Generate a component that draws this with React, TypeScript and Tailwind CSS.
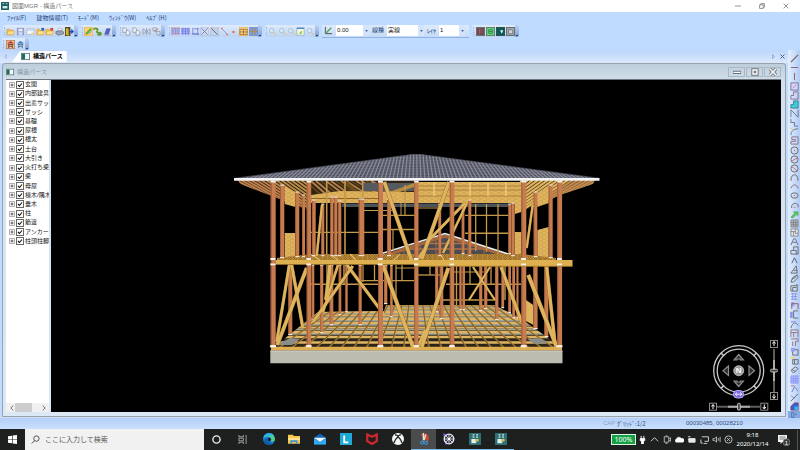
import React from "react";

const UI_FONT = "font-['Liberation_Sans','Noto_Sans_CJK_JP',sans-serif]";
const JP_FONT = "font-['Noto_Sans_CJK_JP',sans-serif]";

type Kids = { children: React.ReactNode };

function Icon({ children, className = "size-[10px]" }: Kids & { className?: string }) {
  return (
    <svg viewBox="0 0 10 10" className={className} fill="none" stroke="#666" strokeWidth="1" aria-hidden="true">
      {children}
    </svg>
  );
}

/* ---------- toolbar icons ---------- */

const folder = (
  <>
    <path d="M1 8.500V2.500h3l1 1h3v5z" fill="#f6c453" stroke="#c9952f" strokeWidth=".6" />
    <path d="M1 8.500l1.500-4H9.500L8 8.500z" fill="#ffe08a" stroke="#c9952f" strokeWidth=".5" />
  </>
);
const folderUp = (
  <>
    {folder}
    <path d="M6 4V1h3v3z" fill="#2c5fc4" stroke="none" />
  </>
);
const folderRed = (
  <>
    {folder}
    <path d="M6 4V1h3v3z" fill="#d9402f" stroke="none" />
  </>
);
const save = (
  <>
    <rect x="1.500" y="1.500" width="7" height="7" fill="#a9b4dc" stroke="#8994c4" />
    <rect x="3" y="2" width="4" height="2.500" fill="#eef1fb" stroke="none" />
    <rect x="3" y="6" width="4" height="2.500" fill="#dfe4f5" stroke="none" />
  </>
);
const sheet = (
  <>
    <rect x="1" y="2" width="8" height="6.500" fill="#f4f5fa" stroke="#9fabc8" strokeWidth=".7" />
    <path d="M1 3.500h8" stroke="#b7c3dd" />
    <path d="M6 6h3v2.500H6z" fill="#e8d7a0" stroke="none" />
  </>
);
const printer = (
  <>
    <path d="M3 4l2-3 3 1-1 3z" fill="#fff" stroke="#8b93a3" strokeWidth=".6" />
    <path d="M1 5l6-1 2.500 1.500v2L4 9 1 7.500z" fill="#9aa3b3" stroke="#555e70" strokeWidth=".7" />
  </>
);
const exit = (
  <>
    <path d="M0 0h6v10H0z" fill="#4b4a2e" stroke="none" />
    <path d="M1 1l3 1v8L1 8.500z" fill="#dcb51e" stroke="none" />
    <path d="M5 4.500h2V2l3 3-3 3V6H5z" fill="#2346c8" stroke="none" />
  </>
);
const pencilBox = (
  <>
    <rect x="0" y="0" width="10" height="10" fill="#ffcf7a" stroke="#c8963e" strokeWidth=".6" />
    <path d="M2 8L8 2" stroke="#5fb03a" strokeWidth="2.500" />
    <path d="M5 8l3-3" stroke="#4b9bd0" />
  </>
);
const greenLink = (
  <>
    <path d="M1 3c0-2 4-2 4 0s-2 2 0 3 4 0 4 1.500S6 9 5 8" stroke="#5a9a2e" strokeWidth="2" />
    <path d="M2 2l3 3" stroke="#d9cf3e" />
  </>
);
const eraser = (
  <>
    <path d="M2 8l2-6h4L6 8z" fill="#5a62c8" stroke="#3e458f" strokeWidth=".6" />
    <path d="M1 9h7" stroke="#8a93c8" />
  </>
);
const copies = (
  <>
    <path d="M1 1h3l1 1v4H1z" fill="#eef2fa" stroke="#8a93a3" strokeWidth=".8" />
    <path d="M4.500 4h3l1 1v4h-4z" fill="#eef2fa" stroke="#8a93a3" strokeWidth=".8" />
  </>
);
const mirror = <path d="M1 2v6l3-2V4zM9 2v6L6 6V4zM5 1v8" stroke="#8a93a3" strokeWidth=".8" />;
const redCopy = (
  <>
    <path d="M1 1h4v3H1zM4 5h5v4H6z" stroke="#8a93a3" strokeWidth=".8" />
    <path d="M2 5l5-3" stroke="#c8786e" />
  </>
);
const gridRed = (
  <>
    <path d="M0 1h10v7H0z" fill="#b9bdf0" stroke="none" />
    <path d="M0 2h10M0 4.500h10M0 7h10M2 1v7M5 1v7M8 1v7" stroke="#8a8fd2" strokeWidth=".8" />
    <path d="M0 1h10M0 8h10" stroke="#d08a8a" strokeWidth=".8" />
  </>
);
const gridBlue = (
  <>
    <path d="M0 1h10v7H0z" fill="#bcc4f6" stroke="none" />
    <path d="M0 2h10M0 4.500h10M0 7h10M2 1v8M5 1v8M8 1v8" stroke="#6a76e0" strokeWidth=".9" />
  </>
);
const gridEdge = <path d="M2 1v7h7M7.500 1v8M1 7.500h8M3 2h6" stroke="#6c78d8" strokeWidth=".9" />;
const cross = (
  <>
    <path d="M.5.5h9v9h-9z" fill="#cfdcf2" stroke="#a9b9d6" strokeWidth=".6" />
    <path d="M1.500 1.500l7 7M8.500 1.500l-7 7" stroke="#65769c" strokeWidth=".9" />
  </>
);
const diag = (
  <>
    <path d="M.5.5h9v9h-9z" fill="#c3d0e6" stroke="#a9b9d6" strokeWidth=".6" />
    <path d="M1.500 1.500l7 7" stroke="#55658a" />
    <path d="M1 1h1.500v1.500H1z" fill="#d98458" stroke="none" />
  </>
);
const diagRed = (
  <>
    <path d="M2 2l6 6" stroke="#8193b4" />
    <path d="M1 1.500h2M7 8.500h2" stroke="#dd7755" strokeWidth="1.500" />
  </>
);
const dot = <circle cx="5" cy="5.500" r="1.300" fill="#e2703c" stroke="none" />;
const tableOrange = (
  <>
    <rect x="0" y="0" width="10" height="10" fill="#fbd68c" stroke="#c8963e" strokeWidth=".6" />
    <path d="M1 2.500h8v6H1zM1 5.500h8M5 2.500v6" stroke="#a4702c" />
  </>
);
const tableBlue = (
  <>
    <rect x="0" y="0" width="10" height="10" fill="#7f9ede" stroke="#6c8ac2" strokeWidth=".6" />
    <path d="M0 5h10M3.500 1v8M7 1v8" stroke="#a88c62" strokeWidth="1.300" />
  </>
);
const lens = (
  <>
    <circle cx="4" cy="4" r="2.500" fill="#d5e6f4" stroke="#a3c1d8" strokeWidth="1" />
    <path d="M6 6l3 3" stroke="#dcc3a2" strokeWidth="1.500" />
  </>
);
const lensPage = (
  <>
    <rect x="1" y="1" width="8" height="8" fill="#f6f9d6" stroke="#7fa6c8" strokeWidth=".7" />
    <path d="M1 1.500h8" stroke="#4e86c8" strokeWidth="1.500" />
    <path d="M3 7.500l3.500-3.500v3.500z" fill="#8bc34a" stroke="none" />
  </>
);
const angle = (
  <>
    <path d="M1.500 1v7.500H9" stroke="#3e4b57" />
    <path d="M2 8l6-6" stroke="#4fa154" strokeWidth="1.500" />
  </>
);
const darkGrid = (
  <>
    <rect x=".5" y=".5" width="9" height="9" fill="#6b4a55" stroke="#6a7068" />
    <path d="M3 3h4M3 5.500h4M4 2v6" stroke="#b5586e" strokeWidth=".9" />
  </>
);
const greenGrid = (
  <>
    <rect x=".5" y=".5" width="9" height="9" fill="#62cf80" stroke="#5a8060" />
    <path d="M3 3h4v4H3zM3 5h4" stroke="#2f7a48" strokeWidth=".8" />
  </>
);
const teal = (
  <>
    <rect x=".5" y=".5" width="9" height="9" fill="#0d5a58" stroke="#2c4a4a" />
    <path d="M4.500 3.500h3.500L6.500 7.500z" fill="#e4f6ef" stroke="none" />
  </>
);
const pages = (
  <>
    <rect x=".5" y=".5" width="9" height="9" fill="#a2a8ac" stroke="#5e656a" />
    <path d="M3 3h3l1.500 1.500V7.500H3z" fill="#d3d7da" stroke="#54595e" strokeWidth=".7" />
  </>
);
const houseRed = (
  <>
    <rect x=".3" y=".3" width="9.400" height="9.400" fill="#f2b98c" stroke="#9c7250" strokeWidth=".7" />
    <path d="M1 4L5 1 9 4z" fill="#c4382e" stroke="none" />
    <path d="M2 5h6M3 5v4M7 5v4M3 7h4" stroke="#583c2c" strokeWidth=".9" />
  </>
);
const houseBlue = (
  <>
    <path d="M1 4L5 1 9 4z" fill="#2e7ac8" stroke="none" />
    <path d="M2 5h6M3 5v4M7 5v4M3 7h4" stroke="#40668f" strokeWidth=".9" />
  </>
);

type Tool = [string, React.ReactNode];

const fileTools: Tool[] = [["開く", folder], ["保存", save], ["図面", sheet], ["読込", folderUp], ["書出", folderRed], ["印刷", printer], ["終了", exit]];
const drawTools: Tool[] = [["編集", pencilBox], ["連結", greenLink], ["消去", eraser]];
const copyTools: Tool[] = [["複写", copies], ["連続複写", copies], ["反転", mirror], ["変形", redCopy]];
const snapTools: Tool[] = [["グリッド1", gridRed], ["グリッド2", gridBlue], ["端部", gridEdge], ["交点", cross], ["線上", diag], ["端点", diagRed], ["点", dot], ["表1", tableOrange], ["表2", tableBlue]];
const zoomTools: Tool[] = [["拡大", lens], ["範囲", lens], ["縮小", lens], ["全体", lensPage], ["前画面", lens]];
const viewTools: Tool[] = [["表示1", darkGrid], ["表示2", greenGrid], ["表示3", teal], ["表示4", pages]];
const houseTools: Tool[] = [["構造", houseRed], ["外観", houseBlue]];

function ToolButtons({ tools }: { tools: Tool[] }) {
  return (
    <>
      {tools.map(([name, art]) => (
        <button key={name} aria-label={name} className="flex h-full min-w-0 flex-1 items-center justify-center">
          <Icon className="size-[9px]">{art}</Icon>
        </button>
      ))}
    </>
  );
}

function ToolGroup({ width, children }: Kids & { width: string }) {
  return (
    <div className={`flex h-3 shrink-0 items-center rounded-[2px] bg-linear-to-b from-[#dfebfc] to-[#bdd3f3] ${width}`}>
      <span className="mx-px h-2 border-l border-dotted border-[#9db8e2]" />
      {children}
      <span className="flex h-3 w-1 shrink-0 items-end justify-center rounded-r-[2px] bg-linear-to-b from-[#bcd2f2] to-[#7f9fd0]">
        <span className="mb-px h-px w-[2px] bg-[#27457c]" />
      </span>
    </div>
  );
}

function Combo({ id, value, width, options }: { id: string; value: string; width: string; options: string[] }) {
  return (
    <span className={`grid h-[11px] shrink-0 items-center bg-white ${width}`}>
      <select
        id={id}
        aria-label={id}
        defaultValue={value}
        className="col-start-1 row-start-1 h-[11px] w-full appearance-none bg-transparent px-px text-[6px] leading-[11px] text-[#222] outline-none"
      >
        {options.map((o) => (
          <option key={o}>{o}</option>
        ))}
      </select>
      <span className="pointer-events-none col-start-1 row-start-1 flex h-[11px] w-[6px] items-center justify-center justify-self-end bg-[#d3e3fa]">
        <svg viewBox="0 0 4 3" className="h-[2px] w-[3px]"><path d="M0 0h4L2 3z" fill="#3f5f96" /></svg>
      </span>
    </span>
  );
}

/* ---------- right tool column ---------- */

const R = "#c06a78";
const sideIcons: React.ReactNode[] = [
  <path d="M1 9L9 1" stroke="#776068" strokeWidth="1.300" />,
  <path d="M1 5h8" stroke="#8a5868" />,
  <path d="M5 1v8" stroke="#8a5868" />,
  <><rect x="1" y="1" width="8" height="8" fill="#d9d4f5" stroke="#77749a" /><path d="M3 7l4-4" stroke="#b37fe0" /></>,
  <path d="M4 1h5v8H1V5h3z" stroke="#8a6d84" />,
  <path d="M4 1h5v8H1V5h3z" fill="#35cfdc" stroke="#4a7a84" />,
  <path d="M1 9V1l8 8V1" stroke="#62748a" />,
  <path d="M1 1v4h4v4h4" stroke="#62748a" />,
  <><path d="M1 9c0-4 3-7 8-7" stroke="#62748a" /><path d="M1 1l3 3" stroke="#e0c23e" /></>,
  <path d="M1 9h8V1H2v3h4v2H1z" stroke="#8a6d84" />,
  <><circle cx="5" cy="5" r="4" /><circle cx="5" cy="5" r=".7" fill={R} stroke="none" /></>,
  <><circle cx="5" cy="5" r="4" /><path d="M1 7l8-4" stroke={R} /></>,
  <><circle cx="5" cy="5" r="4" /><path d="M5 5l3 3M2 3l3 2" stroke={R} /></>,
  <><path d="M1 8c0-8 8-8 8 0" /><path d="M1 8h1M8 8h1" stroke={R} /></>,
  <path d="M1 7c2-5 6-5 8 0" stroke="#83616d" />,
  <><ellipse cx="5" cy="5" rx="4" ry="3" /><circle cx="5" cy="5" r=".7" fill={R} stroke="none" /></>,
  <><path d="M2 8c-2-6 8-8 7-1" /><path d="M4 7h2" stroke={R} /></>,
  <path d="M1 8l4-4-1-2h5v4L7 5 3 9z" fill="#5cc95c" stroke="#3a9e46" strokeWidth=".6" />,
  <><path d="M1 1h8v8H1z" fill="#b4b9c2" stroke="none" /><path d="M1 1h8v8H1zM1 4h8M1 6.500h8M4 1v8M6.500 1v8" strokeWidth=".6" /></>,
  <><path d="M1 1h8v8H1z" fill="#e3e6ea" stroke="none" /><path d="M1 1h8v8H1zM1 4h5M4 4v5M6 1v5h3" strokeWidth=".7" /></>,
  <path d="M1 9l3-7h2l3 7M3 6h4" stroke="#6a6d84" />,
  <path d="M1 9V5h3V1h5v8zM4 5h3v4" />,
  <path d="M2 8l3-6 3 6" stroke="#514f66" />,
  <path d="M1 9l6-8 1 8zM4 6h4" />,
  <path d="M1 9l2-5 5-3 1 3-5 5zM2 6l5-3" />,
  <path d="M1 3h7v6H1zM3 9V5h4M7 1l2 2" />,
  <path d="M1 2h7M1 5h7M1 8h7M3 1v8M6 1v8" stroke="#8a94ea" />,
  <><path d="M1 1h4v5H1z" fill="#a6a8f5" stroke="none" /><path d="M2 9V3h7v6" stroke="#8a5868" /></>,
  <><path d="M0 2h3v7H0z" fill="#9096ee" stroke="none" /><path d="M9 1H4v8h5" /></>,
  <><path d="M1 9c2-7 6-7 8-3" /><path d="M1 2h6" stroke="#a0a5f2" strokeWidth="2" /></>,
  <path d="M1 9V1h8v8M1 4h8M4 4v5" stroke="#95707c" />,
  <path d="M1 1h8v3H6v5M3 4v5" stroke="#95707c" />,
  <><path d="M3 3h6v6H3z" /><path d="M1 1h5v4H1z" fill="#9aa0f0" stroke="none" /></>,
  <><path d="M3 4h6v5H3zM5 4v5" /><path d="M1 1h4v2H1z" fill="#e5d66a" stroke="none" /></>,
  <path d="M1 6l5-4 3 2-5 5zM2 5l4 2" />,
  <><path d="M1 1h8v8H1z" fill="#b9c0fa" stroke="none" /><path d="M1 1h8v8H1zM1 4h8M1 6.500h8M4 1v8M6.500 1v8" stroke="#858cf2" strokeWidth=".8" /></>,
  <><path d="M2 9l3-6 4 5" stroke="#6a78cc" /><path d="M1 2h4" stroke={R} /></>,
  <><path d="M1 9l8-8" /><path d="M1 3l4 3" stroke="#7b82f0" /></>,
  <><path d="M1 9V5l4-4h4v8z" fill="#2e62d8" stroke="#8f3d5c" /><path d="M5 5h4v4H5z" fill="#39b5e4" stroke="none" /></>,
];

function SideTools() {
  return (
    <aside className="flex w-3 shrink-0 flex-col bg-linear-to-r from-[#e3eefe] to-[#b2ccf3] pt-1">
      {sideIcons.map((art, i) => (
        <button key={i} aria-label={`作図 ${i + 1}`} className="flex min-h-0 flex-1 items-center justify-center overflow-hidden">
          <Icon className="size-[9px]">{art}</Icon>
        </button>
      ))}
      <button aria-label="その他" className="flex h-[7px] items-center justify-center bg-[#85a9de]">
        <Icon className="size-[6px]"><path d="M1 1h4v8H1zM7 4h3" stroke="#3560a8" /></Icon>
      </button>
    </aside>
  );
}

/* ---------- tree ---------- */

const parts = ["玄関", "内部建具", "出窓サッシ", "サッシ", "基礎", "屋根", "根太", "土台", "大引き", "火打ち梁", "梁", "母屋", "棟木/隅木", "垂木", "柱", "筋違", "アンカーボルト", "柱頭柱脚"];

function Tree() {
  return (
    <div className="flex w-[43px] shrink-0 flex-col overflow-hidden bg-white">
      <ul className="flex h-[166px] flex-col">
        {parts.map((name) => (
          <li key={name} className="flex min-h-0 flex-1 items-center pl-[3px]">
            <button aria-label={`${name}を展開`} className="mr-px shrink-0">
              <svg viewBox="0 0 6 6" className="size-[6px]">
                <path d="M.5.5h5v5h-5z" fill="#fff" stroke="#9a9a9a" strokeWidth=".8" />
                <path d="M1.500 3h3M3 1.500v3" stroke="#333" strokeWidth=".8" />
              </svg>
            </button>
            <label className="flex items-center gap-px whitespace-nowrap text-[6px] leading-[9px] text-[#111]">
              <span className="grid size-2 shrink-0">
                <input type="checkbox" defaultChecked className="peer col-start-1 row-start-1 size-2 appearance-none border border-[#666] bg-white" />
                <svg viewBox="0 0 8 8" className="pointer-events-none invisible col-start-1 row-start-1 size-2 peer-checked:visible">
                  <path d="M2 4l1.500 1.500L6 2.500" fill="none" stroke="#111" strokeWidth="1.100" />
                </svg>
              </span>
              {name}
            </label>
          </li>
        ))}
      </ul>
      <div className="mt-auto flex h-[9px] items-center bg-[#f0f0f0] px-[2px]">
        <button aria-label="左へ" className="flex w-[7px] justify-center">
          <Icon className="size-[6px]"><path d="M7 1L3 5l4 4" strokeWidth="1.600" /></Icon>
        </button>
        <span className="h-[9px] w-[17px] bg-[#cdcdcd]" />
        <button aria-label="右へ" className="ml-auto flex w-[7px] justify-center">
          <Icon className="size-[6px]"><path d="M3 1l4 4-4 4" strokeWidth="1.600" /></Icon>
        </button>
      </div>
    </div>
  );
}

/* ---------- perspective of the timber frame ---------- */

type Post = [number, number, number, number]; // x, width, top, bottom
type Seg = [number, number, number, number, number]; // x1, y1, x2, y2, width

const upperBack: Post[] = [
  [280, 4.3, 185, 258], [295.3, 4, 192, 257], [302, 3, 195, 257], [312, 3.7, 200, 256], [321.3, 3, 204, 256],
  [330.3, 3.2, 197, 256], [334.2, 3.2, 197, 256], [338, 3.3, 201, 256], [358.7, 5.6, 199, 256], [387, 4, 199, 256],
  [438.3, 2.9, 204, 256], [461.7, 2.7, 204, 254], [468.3, 3, 200, 256], [508.3, 2.7, 204, 254], [511.3, 3.4, 203, 256],
  [533.7, 3.6, 192, 257], [548.7, 4, 185, 258],
];
const lowerBack: Post[] = [
  [288.3, 4, 265, 335], [311.7, 2.6, 265, 320], [320, 3.3, 265, 333], [329.7, 3.6, 265, 325], [338.7, 2.6, 265, 315],
  [345.3, 2.4, 265, 312], [358.7, 3, 265, 325], [384, 3.3, 265, 304], [390, 2.7, 265, 317], [435, 3.3, 265, 312],
  [439.7, 3.6, 265, 319], [459.3, 2.4, 265, 310], [462.5, 2.5, 265, 310], [479, 3.3, 265, 311], [484, 3.3, 265, 309],
  [495, 3.4, 265, 320], [501.5, 2.6, 265, 308], [508.3, 2.7, 265, 313], [512.3, 2.7, 265, 318], [516.5, 2, 265, 318],
  [533.3, 4.3, 265, 329], [544.3, 4, 265, 337],
];
const front: Post[] = [
  [270.7, 5, 181, 346], [306.7, 4.5, 181, 346], [378, 5, 181, 346], [414.3, 4.2, 181, 346],
  [449.8, 4.5, 181, 346], [521.4, 4.9, 181, 346], [557.3, 4.8, 181, 346],
];
const braces: Seg[] = [
  [322, 205, 316.7, 256, 2.6], [384.3, 182, 411.7, 261, 4], [449, 182, 421.7, 259, 4], [465, 203, 427, 242, 3],
  [467, 203, 443, 253, 2.6], [532.7, 205, 526.7, 248, 2.5], [424, 250, 416, 262, 3],
  [289.3, 265, 276.7, 342, 3.2], [306.7, 268, 277.3, 345, 4], [291.7, 265, 302.7, 327, 3.4], [338, 265, 323, 312, 2.8],
  [352.7, 266, 313, 322, 3.4], [347, 265, 385, 316, 3.4], [330, 265, 326, 300, 4], [383, 265, 413, 347, 4.2],
  [448.3, 268, 421.7, 347, 4.2], [501, 267, 521.7, 322, 3.6], [528.3, 275, 556.7, 347, 4.2], [546.7, 267, 555, 344, 3.6],
  [473, 267, 495, 300, 2.2], [490, 267, 469, 300, 2.2], [425, 330, 418, 347, 3],
];
const studs: Seg[] = [
  [311, 232.4, 378, 232.4, 1.4], [326.7, 181, 326.7, 256, 1.6], [345, 181, 345, 256, 1.6], [362.7, 181, 362.7, 256, 1.4],
  [364, 210.5, 392, 210.5, 1], [383, 215.4, 416, 215.4, 1.3], [383, 229.5, 416, 229.5, 1.3], [405, 185, 405, 215, 1.2], [393, 229, 393, 250, 1.2],
  [401, 203, 401, 215, 1], [465, 215.4, 510, 215.4, 1.4], [465, 233.3, 510, 233.3, 1.4], [475.7, 204, 475.7, 251, 1.3], [486.5, 204, 486.5, 252, 1.3],
  [498, 204, 498, 254, 1.3], [418, 208, 438, 208, 1], [311, 284.3, 378, 284.3, 1.4], [361, 280.7, 414, 280.7, 1.3], [313, 265, 313, 322, 1.5],
  [327, 265, 327, 284, 1.5], [344, 265, 344, 284, 1.5], [363, 265, 363, 282, 1.3], [374.5, 265, 374.5, 281, 1.3], [396, 265, 396, 300, 1.3], [402, 265, 402, 281, 1.3],
  [396, 268, 414, 268, 1], [418, 275, 441, 275, 1.3], [430, 265, 430, 275, 1.3], [446, 284.3, 521, 284.3, 1.4], [443, 300, 495, 300, 1.5], [456.5, 265, 456.5, 316, 1.4],
  [470, 265, 470, 284, 1.3], [454, 272, 485, 272, 1], [491, 265, 491, 284, 1.3], [505, 265, 505, 300, 1.4],
];

const WOOD = "#dfb45e";
const POST = "#c67c4e";

function Posts({ list }: { list: Post[] }) {
  return (
    <>
      {list.map(([x, w, t, b], i) => (
        <g key={i}>
          <rect x={x} y={t} width={w} height={b - t} fill={POST} />
          <rect x={x} y={t} width={w * 0.2} height={b - t} fill="#9c5a34" />
          <rect x={x} y={b - 1} width={w} height="1.200" fill="#f0e6dc" />
          <rect x={x} y={t - 0.5} width={w} height="1.200" fill="#e8dccf" />
        </g>
      ))}
    </>
  );
}

function Segs({ list, color }: { list: Seg[]; color: string }) {
  return (
    <>
      {list.map(([x1, y1, x2, y2, w], i) => (
        <line key={i} x1={x1} y1={y1} x2={x2} y2={y2} stroke={color} strokeWidth={w} />
      ))}
    </>
  );
}

const range = (n: number) => Array.from({ length: n }, (_, i) => i);

function House() {
  return (
    <svg viewBox="51 80 730 332" className="block h-full w-full" role="img" aria-label="木造軸組の構造パース">
      <defs>
        <clipPath id="roof"><path d="M235 178.500L412 154.500H421L599 178.500z" /></clipPath>
        <clipPath id="floor"><path d="M274 347L318 312L384 311L386 305L494 305L520 318L561 347z" /></clipPath>
        <clipPath id="eaveL"><path d="M238 180H310V212L297 206L272 196L240 184z" /></clipPath>
        <clipPath id="eaveR"><path d="M595 180H520V212L537 206L560 195L593 184z" /></clipPath>
        <clipPath id="attic"><path d="M378 256L445 234L513 256z" /></clipPath>
        <pattern id="grain" width="7" height="4" patternUnits="userSpaceOnUse">
          <rect width="7" height="4" fill={WOOD} />
          <path d="M0 1h4M3 3h4" stroke="#c99a48" strokeWidth=".7" />
        </pattern>
        <pattern id="deck" width="5" height="3" patternUnits="userSpaceOnUse">
          <rect width="5" height="3" fill="#bd8e38" />
          <path d="M0 3l2-3M3 3l2-3" stroke="#7a5420" strokeWidth=".8" />
        </pattern>
      </defs>

      {/* eaves */}
      <g clipPath="url(#eaveL)">
        <rect x="235" y="178" width="76" height="36" fill="#2a1c10" />
        {range(16).map((i) => (
          <line key={i} x1={236 + i * 5} y1="180" x2={268 + i * 7} y2={197 + i * 2} stroke={i < 6 ? "#bd7f4c" : "#b98d4a"} strokeWidth="1.900" />
        ))}
      </g>
      <g clipPath="url(#eaveR)">
        <rect x="520" y="178" width="76" height="36" fill="#2a1c10" />
        {range(16).map((i) => (
          <line key={i} x1={598 - i * 5} y1="180" x2={566 - i * 7} y2={197 + i * 2} stroke={i < 6 ? "#c08a50" : WOOD} strokeWidth="2.200" />
        ))}
      </g>

      {/* attic framing and top plates */}
      <path d="M311 181H415V196H311z" fill="#31220f" />
      {range(14).map((i) => (
        <line key={i} x1={306 + i * 5} y1="181" x2={322 + i * 6} y2="196" stroke={i % 3 ? "#b17f4d" : "#5c3f1b"} strokeWidth="2" />
      ))}
      <path d="M363 183H414V191H363z" fill="#555960" />
      <path d="M345 182l16 14" stroke="#6b4c1e" strokeWidth="4" />
      <path d="M388 196L414 187V183L392 191z" fill="#b58b40" />
      <path d="M311 195L340 191L414 192V203H311z" fill="url(#grain)" />
      <path d="M414 182H524V203H414z" fill="url(#grain)" />
      <path d="M418 186H521M418 190H521M418 196H521" stroke="#a57c38" strokeWidth=".9" />
      <path d="M434 182V196M452 182V196M470 182V196M488 182V196M506 182V196" stroke="#f0c97a" strokeWidth="1.500" />
      <path d="M311 198.500H378" stroke="#8c6628" strokeWidth="1" />
      <path d="M342 203.500H510V207H342z" fill="#4b5359" />

      {/* wall panels */}
      <path d="M284.700 186L295.300 192V207L284.700 204z" fill="url(#grain)" />
      <path d="M284.700 233H295.300V257H284.700z" fill="url(#grain)" />
      <path d="M548.700 187L537.300 193V207L548.700 203z" fill="url(#grain)" />
      <path d="M548.700 227L537.300 230V257H548.700z" fill="url(#grain)" />
      <path d="M514.700 200H521.300V212L514.700 214z" fill="url(#grain)" />
      <path d="M514.700 232H521.300V256H514.700z" fill="url(#grain)" />
      <path d="M526 300L533.300 305V325L526 321z" fill={WOOD} />

      {/* lower gable seen behind the upper storey */}
      <path d="M378 256L445 234L513 256z" fill="#4b4b50" />
      <g clipPath="url(#attic)">
        {range(8).map((i) => (
          <line key={i} x1={388 + i * 16} y1="235" x2={388 + i * 16} y2="256" stroke="#8b5c3a" strokeWidth="1.500" />
        ))}
        <path d="M380 243.500H512M380 249H512" stroke="#b07248" strokeWidth="1.400" />
        <path d="M378 258L445 236L513 258" stroke="#a5663e" strokeWidth="3" fill="none" />
      </g>
      <path d="M374 256L445 233.500L514 256" stroke="#ecece8" strokeWidth="1.600" fill="none" />

      <Segs list={studs} color="#c2984a" />
      <path d="M277 258L311 254H521L556 258V262H277z" fill="url(#deck)" />
      <path d="M310 254l10 6M330 254l8 6M350 254l6 6M400 254l-6 6M440 254l4 6" stroke="#e0b762" strokeWidth="1.300" />

      {/* ground floor joists */}
      <g clipPath="url(#floor)">
        <path d="M272 304H562V348H272z" fill="#2a241a" />
        {[306, 309, 312, 315.5, 319, 323, 327.5, 332, 337, 342.5].map((y, i) => (
          <g key={y}>
            {i < 8 && <path d={`M290 ${y + 1.9}H545`} stroke="#a3a498" strokeWidth="1.900" />}
            <path d={`M272 ${y}H562`} stroke="#deb461" strokeWidth={1.6 + i * 0.1} />
          </g>
        ))}
        {range(31).map((i) => {
          const bottom = 230 + i * 12.4;
          const top = 416 + (bottom - 416) * 0.55;
          return <line key={i} x1={top} y1="304" x2={bottom} y2="347" stroke="#7d5b26" strokeWidth="1.400" />;
        })}
        {range(31).map((i) => {
          const bottom = 231 + i * 12.4;
          const top = 416 + (bottom - 416) * 0.55;
          return <line key={i} x1={top} y1="304" x2={bottom} y2="347" stroke="#cfa353" strokeWidth=".6" />;
        })}
        <path d="M276 345l14-7 10 1-8 6zM535 344l-8-5 12-1 10 5z" fill="#8a8d88" />
      </g>

      <Posts list={upperBack} />
      <Posts list={lowerBack} />
      <Segs list={braces} color="#8a6528" />
      <Segs list={braces.map(([a, b, c, d, w]): Seg => [a, b, c, d, w * 0.85])} color={WOOD} />
      <Posts list={front} />

      {/* girt, sill and foundation */}
      <path d="M275.500 260H572.500V266.500H414V264.500H275.500z" fill="#dfb04f" />
      <path d="M275.500 264.500H414M414 266.300H572.500" stroke="#9a6f27" strokeWidth=".7" />
      <path d="M271 346.800H562V350.600H271z" fill="#dfae50" />
      <path d="M270.300 350.600H562.500V363.300H270.300z" fill="#bcbcb1" />
      <path d="M270.300 351H562.500" stroke="#d4d2c4" strokeWidth=".8" />
      {front.map(([x, w]) => (
        <g key={x} fill="#f5f3ee">
          <rect x={x - 0.3} y="258" width={w} height="2" />
          <rect x={x - 0.3} y="263.500" width={w} height="1.800" />
          <rect x={x - 0.8} y="345.500" width={w + 1.2} height="1.800" />
          <rect x={x} y="181" width={w} height="1.500" />
        </g>
      ))}

      {/* tiled roof */}
      <g clipPath="url(#roof)">
        <rect x="234" y="153" width="366" height="27" fill="#5f616f" />
        {range(9).map((i) => (
          <path key={i} d={`M234 ${156.5 + i * 2.7}H600`} stroke="#484a57" strokeWidth=".9" />
        ))}
        {range(104).map((i) => {
          const bottom = 209 + i * 4;
          return <line key={i} x1={416 + (bottom - 416) * 0.78} y1="154" x2={bottom} y2="179" stroke="#8b8d9c" strokeWidth="1.200" />;
        })}
      </g>
      <path d="M235 178.200L412 154.500H421L599 178.200" stroke="#555763" strokeWidth=".7" fill="none" />
      <path d="M234 178H599.500V180.700H234z" fill="#f4f4f4" />
    </svg>
  );
}

function Compass() {
  return (
    <svg viewBox="710 338 72 74" className="absolute right-0 bottom-0 h-[74px] w-[72px]" fill="none" stroke="#c9c9c9" role="img" aria-label="視点コントロール">
      <circle cx="739.700" cy="370.700" r="25" strokeWidth="1.300" />
      <circle cx="739.700" cy="370.700" r="21.500" strokeWidth="1.300" />
      <path d="M722 353l3 3M757.400 353l-3 3M722 388.400l3-3M757.400 388.400l-3-3" strokeWidth="1.500" />
      <g fill="#2b2b2b" stroke="#8c8c8c" strokeWidth="1.200">
        <path d="M735 360l4.700-5.500 4.700 5.500h-3v-1h-3.400v1z" />
        <path d="M735 381l4.700 5.500 4.700-5.500h-3v1h-3.400v-1z" />
        <path d="M729.500 366l-5.500 4.700 5.500 4.700z" />
        <path d="M750 366l5.500 4.700-5.500 4.700z" />
      </g>
      <circle cx="739.700" cy="370.700" r="5" fill="#999" stroke="#ddd" strokeWidth=".7" />
      <text x="739.700" y="373.400" textAnchor="middle" fill="#fff" stroke="none" className="font-['Liberation_Sans',sans-serif] text-[8px] font-bold">N</text>
      <rect x="734.500" y="390.500" width="10" height="7.500" rx="3.500" fill="#7867e6" stroke="#cfc8ff" strokeWidth=".8" />
      <path d="M736.500 394.200h6M738 392.500l-1.700 1.700 1.700 1.700M741.200 392.500l1.700 1.700-1.700 1.700" stroke="#fff" strokeWidth=".9" />
      <path d="M775 349v43M718 406.700h43" stroke="#5c5c5c" strokeWidth="2" />
      <path d="M775 360v21M729 406.700h22" stroke="#aaa" strokeWidth="2" />
      <g stroke="#8c8c8c" fill="#000">
        <rect x="771.500" y="340.500" width="7" height="7" />
        <rect x="771.500" y="392.500" width="7" height="7" />
        <rect x="710.500" y="403.200" width="7" height="7" />
        <rect x="761.800" y="403.200" width="7" height="7" />
      </g>
      <path d="M775 346v-4M773.500 343.500l1.500-2 1.500 2M775 394v4M773.500 396.500l1.500 2 1.500-2M714 409v-4M712.500 406.500l1.500-2 1.500 2M765.300 404.500v4M763.800 407l1.500 2 1.500-2" stroke="#fff" />
      <rect x="771.500" y="369.200" width="7" height="2.800" rx="1.200" fill="#444" stroke="#ddd" strokeWidth=".8" />
      <rect x="738.500" y="403.200" width="2.800" height="7" rx="1.200" fill="#444" stroke="#ddd" strokeWidth=".8" />
    </svg>
  );
}

/* ---------- windows taskbar ---------- */

const jw = (
  <>
    <rect x="0" y="0" width="10" height="10" fill="#2f6f74" stroke="none" />
    <path d="M3 1.500h1.500M6 1.500h1.500M3 3.500h1.500M6 3.500h1.500" stroke="#d7eceb" />
    <rect x="2" y="5" width="4" height="3.500" fill="#e2f0ee" stroke="none" />
    <rect x="5" y="5" width="3" height="2" fill="#d9c35a" stroke="none" />
  </>
);

type App = { name: string; art: React.ReactNode; size?: string; state?: "open" | "active" };
const apps: App[] = [
  { name: "Cortana", size: "size-[9px]", art: <circle cx="5" cy="5" r="4" stroke="#f2f2f2" strokeWidth="1.500" /> },
  { name: "タスク ビュー", size: "size-[9px]", art: <path d="M1 0v2h5V0M1 10V8h5v2M1 3.500h5v3H1zM9 0v10" stroke="#b9b9b9" strokeWidth=".9" /> },
  {
    name: "Edge",
    art: (
      <>
        <circle cx="5" cy="5" r="5" fill="#1683d8" stroke="none" />
        <path d="M.3 4A5 5 0 0 1 10 5c0 2-2 2.500-3.500 2C8 5 6 3 4 3S1 3.500.3 4z" fill="#4fd08b" stroke="none" />
        <path d="M.3 4C1 1.500 3 0 5 0c2 0 3 .7 4 2C7 1.500 5 2 4 3S1 3.500.3 4z" fill="#2db4e6" stroke="none" />
        <path d="M3.500 5c0 3 2.500 4 5 3.500A5 5 0 0 1 1 8C.5 5 3 4 4 4.200z" fill="#0c59a4" stroke="none" />
        <path d="M4 5.500c0-1.500 2-2 2.500-.8.300 1-.8 1.300-.3 2.300C5 7.500 4 6.700 4 5.500z" fill="#1e1f1f" stroke="none" />
      </>
    ),
  },
  {
    name: "エクスプローラー",
    art: (
      <>
        <path d="M0 9V1.500h4l1 1h5V9z" fill="#f7c64b" stroke="none" />
        <path d="M0 4h10v2H0z" fill="#ffe08c" stroke="none" />
        <path d="M2 9V6h6v3H6.500V7.500h-3V9z" fill="#3f96d6" stroke="none" />
      </>
    ),
  },
  {
    name: "メール",
    art: (
      <>
        <path d="M0 4l5-3.500L10 4v5.500H0z" fill="#0f66b4" stroke="none" />
        <path d="M0 4h10L5 7.500z" fill="#f2f8fc" stroke="none" />
        <path d="M0 4.300l5 3.400 5-3.400v5.200H0z" fill="#35a7ee" stroke="none" />
      </>
    ),
  },
  {
    name: "L",
    art: (
      <>
        <rect width="10" height="10" fill="#20a9d8" stroke="none" />
        <path d="M3.500 2v5.800H7" stroke="#fff" strokeWidth="1.500" />
      </>
    ),
  },
  { name: "McAfee", art: <path d="M1 1.200l4 2 4-2v5.500L5 9.200 1 6.700z" stroke="#c8282e" strokeWidth="1.900" /> },
  {
    name: "Xbox",
    art: (
      <>
        <circle cx="5" cy="5" r="5" fill="#f5f5f5" stroke="none" />
        <path d="M1.500 8.500C2.500 5.500 4 4 5 3.200 6 4 7.500 5.500 8.500 8.500M2.500 1.500C4 1.500 4.500 2.200 5 2.600c.5-.4 1-1.100 2.500-1.100" stroke="#1f1f1f" strokeWidth="1.100" />
      </>
    ),
  },
  {
    name: "Snipping Tool",
    state: "active",
    art: (
      <>
        <path d="M2 1c5-2 9 2 6 6L5 5z" fill="#d2492a" stroke="none" />
        <path d="M4.500 0v6M6.500 1L5 6" stroke="#dfe8ee" strokeWidth="1.100" />
        <circle cx="3.500" cy="8" r="1.300" stroke="#3f8fd0" />
        <circle cx="6.800" cy="8.200" r="1.300" stroke="#3f8fd0" />
      </>
    ),
  },
  {
    name: "ビデオ",
    state: "open",
    art: (
      <>
        <path d="M0 0l10 4.500L2 10z" fill="#7a4be0" stroke="none" />
        <circle cx="5" cy="5" r="4" fill="#28303c" stroke="#eef2f8" strokeWidth="1.100" />
        <path d="M5 1.500v7M1.500 5h7M2.500 2.500l5 5M7.500 2.500l-5 5" stroke="#dfe6f2" strokeWidth=".7" />
        <circle cx="5" cy="5" r="1.100" fill="#fff" stroke="none" />
      </>
    ),
  },
  { name: "図面MGR", state: "open", art: jw },
  { name: "図面MGR 2", state: "open", art: jw },
];

const tray: Tool[] = [
  ["電源", <path d="M3.500 1v3M6.500 1v3M2.500 4h5v2L6 7.500V10H4V7.500L2.500 6z" fill="#fff" stroke="#fff" />],
  ["隠れているアイコン", <path d="M1 7l4-4 4 4" stroke="#e2e2e2" />],
  ["カメラ", <path d="M2.500 2h5v6h-5zM4 1h2M4 9.500h2M8 4l1.500-1v4L8 6" stroke="#bdbdbd" />],
  ["OneDrive", <path d="M1 8a2 2 0 0 1 .5-3.500A3 3 0 0 1 7 4a2.200 2.200 0 0 1 2 4z" fill="#fff" stroke="#fff" strokeWidth=".5" />],
  ["バッテリー", <path d="M2 4h7v4H2zM1 2h3M1 5h1" fill="#e8e8e8" stroke="#e8e8e8" />],
  ["ネットワーク", <path d="M2 2h7.500v5H5M4 9.500h4M1 5v4h2" stroke="#ddd" />],
  ["音量", <path d="M1 4h2l2-2v6L3 6H1zM7 3.500v3M9 2v6" stroke="#bbb" />],
  ["通知", <><circle cx="5" cy="5" r="4" stroke="#ccc" /><path d="M3.500 3.500l3 3M6.500 3.500l-3 3" stroke="#ccc" /></>],
];

function Taskbar() {
  return (
    <footer className="flex h-[21px] shrink-0 items-stretch bg-[#1e1f1f] text-white">
      <button aria-label="スタート" className="flex w-[25px] shrink-0 items-center justify-center">
        <Icon className="size-[9px]"><path d="M0 1.300L4.500.7v4H0zM5.200.6L10 0v4.700H5.200zM0 5.300h4.500v4L0 8.700zM5.200 5.300H10V10l-4.800-.6z" fill="#fff" stroke="none" /></Icon>
      </button>
      <label className="flex w-[179px] shrink-0 items-center gap-[5px] bg-[#f1f1f1] pl-[6px]">
        <Icon className="size-[9px]"><circle cx="6" cy="4" r="3" stroke="#444" /><path d="M4 6.200L.8 9.500" stroke="#444" /></Icon>
        <input aria-label="検索" placeholder="ここに入力して検索" className="min-w-0 flex-1 bg-transparent text-[7px] leading-[12px] outline-none placeholder:text-[#555]" />
      </label>
      <nav className="flex w-[310px] shrink-0">
        {apps.map((a) => (
          <button
            key={a.name}
            aria-label={a.name}
            className={`flex flex-1 items-center justify-center border-b ${a.state ? "border-[#76b9ed]" : "border-transparent"} ${a.state === "active" ? "bg-[#4a4b4c]" : ""}`}
          >
            <Icon className={a.size ?? "size-3"}>{a.art}</Icon>
          </button>
        ))}
      </nav>
      <div className="ml-auto flex items-center">
        <span className="flex h-[11px] w-[25px] items-center justify-center border border-[#dff5e2] bg-[#16a045] font-['Noto_Sans',sans-serif] text-[7px] leading-[9px]">100%</span>
        <div className="flex w-[99px] items-center">
          {tray.map(([name, art]) => (
            <button key={name} aria-label={name} className="flex flex-1 items-center justify-center">
              <Icon className="size-[9px]">{art}</Icon>
            </button>
          ))}
        </div>
        <time className="flex w-[35px] flex-col items-center font-['Noto_Sans',sans-serif] text-[6px] leading-[9px]">
          <span>9:18</span>
          <span>2020/12/14</span>
        </time>
        <button aria-label="アクション センター" className="flex w-[27px] items-center justify-center">
          <svg viewBox="0 0 12 12" className="size-3">
            <path d="M0 1h9v7H4.500L2.500 10V8H0z" fill="#f2f2f2" />
            <path d="M1.500 3h6M1.500 5h6" stroke="#555" strokeWidth=".8" />
            <circle cx="8.500" cy="8.300" r="3.500" fill="#3b3b3b" stroke="#999" strokeWidth=".6" />
            <text x="8.500" y="10.500" textAnchor="middle" fill="#fff" className="font-['Liberation_Sans',sans-serif] text-[6px]">1</text>
          </svg>
        </button>
        <span className="mr-[2px] h-5 border-l border-[#555]" />
      </div>
    </footer>
  );
}

/* ---------- window ---------- */

const appMark = (
  <>
    <rect x="0" y="0" width="10" height="10" fill="#1e5f66" stroke="none" />
    <path d="M2 2h2M6 2h2" stroke="#cfe8e8" />
    <path d="M2 5h6v3H2z" fill="#cfe8e8" stroke="none" />
  </>
);
const docMark = (
  <>
    <rect x=".5" y="1.500" width="9" height="7" fill="#f2fbf7" stroke="#5c7f7c" />
    <path d="M1 2h3.500v6H1z" fill="#22695f" stroke="none" />
  </>
);

const menus = ["ﾌｧｲﾙ(F)", "建物情報(T)", "ﾓｰﾄﾞ(M)", "ｳｨﾝﾄﾞｳ(W)", "ﾍﾙﾌﾟ(H)"];

export default function App() {
  return (
    <div className={`flex h-screen flex-col overflow-hidden bg-[#bfdbff] text-[6px] ${UI_FONT}`}>
      <header className="flex h-3 shrink-0 items-center bg-white pl-px pr-[2px]">
        <Icon className="size-2">{appMark}</Icon>
        <h1 className="pl-[3px] leading-3 text-[#777]">図面MGR - 構造パース</h1>
        <div className="ml-auto flex">
          <button aria-label="最小化" className="flex w-6 justify-center"><Icon className="size-[6px]"><path d="M0 5h10" stroke="#777" strokeWidth="1.300" /></Icon></button>
          <button aria-label="元に戻す" className="flex w-6 justify-center"><Icon className="size-[6px]"><path d="M1 3h6v6H1zM3 3V1h6v6H7" stroke="#777" strokeWidth="1.300" /></Icon></button>
          <button aria-label="閉じる" className="flex w-6 justify-center"><Icon className="size-[6px]"><path d="M1 1l8 8M9 1L1 9" stroke="#777" strokeWidth="1.300" /></Icon></button>
        </div>
      </header>

      <nav className={`flex h-3 shrink-0 items-center gap-[10px] pl-[7px] text-[#1c3d78] ${JP_FONT}`}>
        {menus.map((m) => (
          <button key={m} className="whitespace-nowrap leading-3">{m}</button>
        ))}
      </nav>

      <div className="flex h-[14px] shrink-0 items-center gap-[3px] pl-[3px]">
        <ToolGroup width="w-[75px]"><ToolButtons tools={fileTools} /></ToolGroup>
        <ToolGroup width="w-[35px]"><ToolButtons tools={drawTools} /></ToolGroup>
        <ToolGroup width="w-[46px]"><ToolButtons tools={copyTools} /></ToolGroup>
        <ToolGroup width="w-[94px]"><ToolButtons tools={snapTools} /></ToolGroup>
        <ToolGroup width="w-[54px]"><ToolButtons tools={zoomTools} /></ToolGroup>
        <div className="flex h-[13px] w-[147px] shrink-0 items-center gap-[3px] whitespace-nowrap border-b border-[#8fb3e6] bg-linear-to-b from-[#dfebfc] to-[#c5daf6] pl-[2px] text-[#1c3d78]">
          <button aria-label="角度" className="shrink-0"><Icon className="size-[9px]">{angle}</Icon></button>
          <Combo id="角度値" value="0.00" width="w-[33px]" options={["0.00", "45.00", "90.00"]} />
          <label htmlFor="線種" className="leading-[11px]">線種</label>
          <Combo id="線種" value="実線" width="w-[37px]" options={["実線", "破線"]} />
          <label htmlFor="レイヤ" className={`leading-[11px] ${JP_FONT}`}>ﾚｲﾔ</label>
          <Combo id="レイヤ" value="1" width="w-[26px]" options={["1", "2"]} />
        </div>
        <ToolGroup width="w-[47px]"><ToolButtons tools={viewTools} /></ToolGroup>
      </div>

      <div className="flex h-3 shrink-0 items-center pl-[2px]">
        <ToolGroup width="w-[27px]"><ToolButtons tools={houseTools} /></ToolGroup>
      </div>

      <div className="flex min-h-0 flex-1">
        <main className="flex min-w-0 flex-1 flex-col">
          <div className="flex h-[13px] shrink-0 items-end bg-linear-to-b from-[#bcd6fb] to-[#dbe8fc] pb-px pl-[3px]">
            <button aria-label="前のタブ" className="flex h-[11px] items-center"><Icon className="size-[5px]"><path d="M7 1L3 5l4 4z" stroke="#7d9fd2" /></Icon></button>
            <button className="ml-1 flex h-[11px] items-center gap-[3px] bg-white pr-1 pl-[9px] font-bold leading-[11px] text-black [clip-path:polygon(8px_0,100%_0,100%_100%,0_100%)]">
              <Icon className="size-[9px]">{docMark}</Icon>
              構造パース
            </button>
            <div className="ml-auto flex h-[11px] items-center gap-1 pr-[3px]">
              <button aria-label="次のタブ"><Icon className="size-[5px]"><path d="M3 1l4 4-4 4z" stroke="#5b80bd" /></Icon></button>
              <button aria-label="タブを閉じる"><Icon className="size-[5px]"><path d="M1 1l8 8M9 1L1 9" stroke="#3f68ad" strokeWidth="2" /></Icon></button>
            </div>
          </div>

          <section className="mr-[2px] ml-[2px] flex min-h-0 flex-1 flex-col rounded-t-[3px] border border-[#9aa1a8] bg-linear-to-b from-[#bfcedb] via-[#d3e0ec] via-5% to-[#dce8f5] pr-1 pb-1 pl-[3px]">
            <div className="flex h-[15px] shrink-0 items-center">
              <Icon className="size-2">{docMark}</Icon>
              <h2 className="pl-[3px] leading-[12px] text-[#8492a0]">構造パース</h2>
              <div className="ml-auto flex gap-px">
                <button aria-label="文書を最小化" className="flex h-[10px] w-[17px] items-center justify-center border border-[#aab8c6]"><Icon className="size-[8px]"><path d="M0 4h10v3H0z" fill="#fff" stroke="#6b737c" strokeWidth="1.300" /></Icon></button>
                <button aria-label="文書を最大化" className="flex h-[10px] w-[17px] items-center justify-center border border-[#aab8c6]"><Icon className="size-[8px]"><path d="M1 1h8v8H1zM4 4h2v2H4z" fill="#fff" stroke="#6b737c" strokeWidth="1.300" /></Icon></button>
                <button aria-label="文書を閉じる" className="flex h-[10px] w-[17px] items-center justify-center border border-[#aab8c6]"><Icon className="size-[8px]"><path d="M1 1l8 8M9 1L1 9" stroke="#6b737c" strokeWidth="4" /><path d="M1 1l8 8M9 1L1 9" stroke="#fff" strokeWidth="1.800" /></Icon></button>
              </div>
            </div>
            <div className="flex min-h-0 flex-1 gap-[2px] border-t border-[#6e757c]">
              <Tree />
              <div className="relative min-w-0 flex-1 bg-black">
                <House />
                <Compass />
              </div>
            </div>
          </section>
          <div className="h-px shrink-0 bg-[#cfe0f6]" />
        </main>
        <SideTools />
      </div>

      <div className="flex h-[11px] shrink-0 items-center bg-linear-to-b from-[#b4cff8] to-[#c9dffb] text-[#33507f]">
        <span className="ml-auto w-[14px] text-[6px] leading-[11px] text-[#8aa3c8]">CAP</span>
        <span className={`w-[69px] leading-[11px] ${JP_FONT}`}>ｸﾞﾘｯﾄﾞ:1/2</span>
        <span className="w-[114px] leading-[11px]">00030485, 00028210</span>
      </div>

      <Taskbar />
    </div>
  );
}
